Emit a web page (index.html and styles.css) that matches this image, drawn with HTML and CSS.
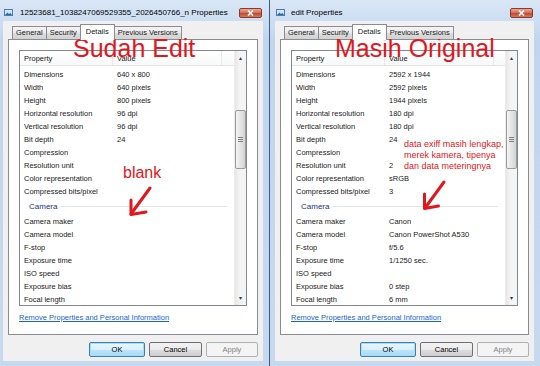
FILE: index.html
```html
<!DOCTYPE html>
<html lang="id">

<head>
  <meta charset="UTF-8">
  <meta name="viewport" content="width=device-width, initial-scale=1.0">
  <title>Properties</title>
  <link rel="stylesheet" href="styles.css">
</head>

<body>
  <div class="desk">
    <!-- kiri: foto yang sudah diedit -->
    <div class="dialog dialog-left">
      <div class="titlebar">
        <svg class="title-icon" width="9" height="7" viewBox="0 0 9 7">
          <rect x="0.5" y="0.5" width="8" height="6" fill="#cfe6f7" stroke="#4f7bb0" />
          <path d="M1 6 L3.5 3.5 L5 5 L6.5 4 L8 6 Z" fill="#2f6a9e" />
        </svg>
        <span class="title">12523681_1038247069529355_2026450766_n Properties</span>
        <span class="close"><svg width="7" height="6" viewBox="0 0 7 6"><path d="M1 0.5 L6 5.5 M6 0.5 L1 5.5" stroke="#fff" stroke-width="1.6" /></svg></span>
      </div>
      <div class="client">
        <div class="tabs">
          <span class="tab">General</span>
          <span class="tab">Security</span>
          <span class="tab active">Details</span>
          <span class="tab">Previous Versions</span>
        </div>
        <div class="panel">
          <div class="list">
            <div class="list-main">
              <div class="list-head">
                <span class="head-prop">Property</span>
                <span class="head-val">Value</span>
              </div>
              <div class="rows">
                <div class="row"><span class="prop">Dimensions</span><span>640 x 800</span></div>
                <div class="row"><span class="prop">Width</span><span>640 pixels</span></div>
                <div class="row"><span class="prop">Height</span><span>800 pixels</span></div>
                <div class="row"><span class="prop">Horizontal resolution</span><span>96 dpi</span></div>
                <div class="row"><span class="prop">Vertical resolution</span><span>96 dpi</span></div>
                <div class="row"><span class="prop">Bit depth</span><span>24</span></div>
                <div class="row"><span class="prop">Compression</span><span></span></div>
                <div class="row"><span class="prop">Resolution unit</span><span></span></div>
                <div class="row"><span class="prop">Color representation</span><span></span></div>
                <div class="row"><span class="prop">Compressed bits/pixel</span><span></span></div>
                <div class="group">Camera</div>
                <div class="row"><span class="prop">Camera maker</span><span></span></div>
                <div class="row"><span class="prop">Camera model</span><span></span></div>
                <div class="row"><span class="prop">F-stop</span><span></span></div>
                <div class="row"><span class="prop">Exposure time</span><span></span></div>
                <div class="row"><span class="prop">ISO speed</span><span></span></div>
                <div class="row"><span class="prop">Exposure bias</span><span></span></div>
                <div class="row"><span class="prop">Focal length</span><span></span></div>
              </div>
            </div>
            <div class="scrollbar">
              <div class="sb-btn">&#9652;</div>
              <div class="sb-track">
                <div class="sb-thumb"><i></i><i></i><i></i></div>
              </div>
              <div class="sb-btn">&#9662;</div>
            </div>
          </div>
          <a class="link" href="#">Remove Properties and Personal Information</a>
        </div>
        <div class="buttons">
          <span class="btn btn-ok">OK</span>
          <span class="btn btn-cancel">Cancel</span>
          <span class="btn btn-apply">Apply</span>
        </div>
      </div>
    </div>

    <!-- kanan: foto asli -->
    <div class="dialog dialog-right">
      <div class="titlebar">
        <svg class="title-icon" width="9" height="7" viewBox="0 0 9 7">
          <rect x="0.5" y="0.5" width="8" height="6" fill="#cfe6f7" stroke="#4f7bb0" />
          <path d="M1 6 L3.5 3.5 L5 5 L6.5 4 L8 6 Z" fill="#2f6a9e" />
        </svg>
        <span class="title">edit Properties</span>
        <span class="close"><svg width="7" height="6" viewBox="0 0 7 6"><path d="M1 0.5 L6 5.5 M6 0.5 L1 5.5" stroke="#fff" stroke-width="1.6" /></svg></span>
      </div>
      <div class="client">
        <div class="tabs">
          <span class="tab">General</span>
          <span class="tab">Security</span>
          <span class="tab active">Details</span>
          <span class="tab">Previous Versions</span>
        </div>
        <div class="panel">
          <div class="list">
            <div class="list-main">
              <div class="list-head">
                <span class="head-prop">Property</span>
                <span class="head-val">Value</span>
              </div>
              <div class="rows">
                <div class="row"><span class="prop">Dimensions</span><span>2592 x 1944</span></div>
                <div class="row"><span class="prop">Width</span><span>2592 pixels</span></div>
                <div class="row"><span class="prop">Height</span><span>1944 pixels</span></div>
                <div class="row"><span class="prop">Horizontal resolution</span><span>180 dpi</span></div>
                <div class="row"><span class="prop">Vertical resolution</span><span>180 dpi</span></div>
                <div class="row"><span class="prop">Bit depth</span><span>24</span></div>
                <div class="row"><span class="prop">Compression</span><span></span></div>
                <div class="row"><span class="prop">Resolution unit</span><span>2</span></div>
                <div class="row"><span class="prop">Color representation</span><span>sRGB</span></div>
                <div class="row"><span class="prop">Compressed bits/pixel</span><span>3</span></div>
                <div class="group">Camera</div>
                <div class="row"><span class="prop">Camera maker</span><span>Canon</span></div>
                <div class="row"><span class="prop">Camera model</span><span>Canon PowerShot A530</span></div>
                <div class="row"><span class="prop">F-stop</span><span>f/5.6</span></div>
                <div class="row"><span class="prop">Exposure time</span><span>1/1250 sec.</span></div>
                <div class="row"><span class="prop">ISO speed</span><span></span></div>
                <div class="row"><span class="prop">Exposure bias</span><span>0 step</span></div>
                <div class="row"><span class="prop">Focal length</span><span>6 mm</span></div>
              </div>
            </div>
            <div class="scrollbar">
              <div class="sb-btn">&#9652;</div>
              <div class="sb-track">
                <div class="sb-thumb"><i></i><i></i><i></i></div>
              </div>
              <div class="sb-btn">&#9662;</div>
            </div>
          </div>
          <a class="link" href="#">Remove Properties and Personal Information</a>
        </div>
        <div class="buttons">
          <span class="btn btn-ok">OK</span>
          <span class="btn btn-cancel">Cancel</span>
          <span class="btn btn-apply">Apply</span>
        </div>
      </div>
    </div>

    <!-- tulisan merah di atas screenshot -->
    <div class="note note-big note-edit">Sudah Edit</div>
    <div class="note note-big note-orig">Masih Original</div>
    <div class="note note-blank">blank</div>
    <div class="note note-small">data exiff masih lengkap,<br>merek kamera, tipenya<br>dan data meteringnya</div>
    <svg class="arrows" width="540" height="366" viewBox="0 0 540 366">
      <g fill="none" stroke="#e3161c" stroke-width="3" stroke-linecap="round" stroke-linejoin="round">
        <path d="M150 188 L131 214" />
        <path d="M131 200 L131 214.5 L146 212" />
        <path d="M444 182 L425 208" />
        <path d="M424.5 194 L424.5 208.5 L438.5 206" />
      </g>
    </svg>
  </div>
</body>

</html>
```

FILE: styles.css
```css
* {
  padding: 0;
  margin: 0;
  box-sizing: border-box;
}

body {
  width: 540px;
  height: 366px;
  overflow: hidden;
  background: #fff;
  font-family: "Liberation Sans", Arial, sans-serif;
  font-size: 7.5px;
  color: #1a1a1a;
}

.desk {
  position: relative;
  display: flex;
  height: 366px;
}

/* jendela */
.dialog {
  display: flex;
  flex-direction: column;
  height: 366px;
  padding-bottom: 5px;
  background: linear-gradient(#d9e7f6, #c0d6ee 40px, #c6daef);
}

.dialog-left {
  width: 269px;
}

.dialog-right {
  width: 271px;
  border-left: 1px solid #3f5d80;
}

.titlebar {
  display: flex;
  align-items: center;
  height: 21px;
  padding: 4px 7px 0 4px;
}

.dialog-right .titlebar {
  padding-left: 6px;
}

.title-icon {
  flex: none;
  margin-right: 7px;
}

.dialog-right .title-icon {
  margin-right: 6px;
}

.title {
  flex: 1;
  font-size: 8px;
  color: #000;
  white-space: nowrap;
  overflow: hidden;
}

.close {
  flex: none;
  display: flex;
  align-items: center;
  justify-content: center;
  width: 23px;
  height: 10px;
  border: 1px solid #8e3a2b;
  border-radius: 2px;
  background: linear-gradient(#eaa897, #d2705c 45%, #c04a33 55%, #d4765f);
}

.client {
  flex: 1;
  display: flex;
  flex-direction: column;
  margin: 0 6px 0 3px;
  padding: 3px 5px 0;
  background: #f0f0f0;
}

.dialog-right .client {
  margin: 0 6px 0 5px;
}

/* tab */
.tabs {
  display: flex;
  align-items: flex-end;
  height: 15px;
  padding-left: 4px;
  position: relative;
  z-index: 1;
}

.tab {
  height: 13px;
  line-height: 12px;
  padding: 0 3px;
  border: 1px solid #898c95;
  border-bottom: none;
  margin-right: -1px;
  background: linear-gradient(#f4f4f4, #ebebeb 50%, #dddddd 51%, #d2d2d2);
  white-space: nowrap;
}

.tab.active {
  height: 16px;
  line-height: 13px;
  margin-bottom: -1px;
  padding: 0 5px;
  background: #fff;
}

.panel {
  height: 296px;
  padding: 10px 10px 0;
  border: 1px solid #898c95;
  background: #fff;
}

/* daftar properti */
.list {
  display: flex;
  height: 256px;
  border: 1px solid #828790;
  overflow: hidden;
}

.list-main {
  flex: 1;
  overflow: hidden;
}

.list-head {
  display: flex;
  height: 15px;
  line-height: 15px;
  border-bottom: 1px solid #e5e5e5;
  background: linear-gradient(#fff, #f7f8f9);
}

.head-prop {
  width: 93px;
  padding-left: 4px;
  border-right: 1px solid #e8e8e8;
}

.head-val {
  width: 109px;
  padding-left: 4px;
  border-right: 1px solid #e8e8e8;
}

.rows {
  padding-top: 2px;
}

.row {
  display: flex;
  height: 13px;
  line-height: 13px;
  white-space: nowrap;
}

.prop {
  width: 97px;
  padding-left: 4px;
}

.group {
  display: flex;
  align-items: center;
  height: 17px;
  padding: 0 7px 0 9px;
  font-size: 8px;
  color: #1e3287;
}

.group::after {
  content: "";
  flex: 1;
  height: 1px;
  margin-left: 4px;
  background: #e2e5ee;
}

/* scrollbar */
.scrollbar {
  display: flex;
  flex-direction: column;
  width: 12px;
  background: linear-gradient(90deg, #e6e6e6, #f4f4f4 40%, #f4f4f4);
  border-left: 1px solid #ececec;
}

.sb-btn {
  height: 14px;
  line-height: 14px;
  text-align: center;
  font-size: 6px;
  color: #3a3a3a;
}

.sb-track {
  flex: 1;
  padding-top: 45px;
}

.sb-thumb {
  display: flex;
  flex-direction: column;
  align-items: center;
  justify-content: center;
  gap: 1px;
  height: 59px;
  border: 1px solid #9a9a9a;
  border-radius: 2px;
  background: linear-gradient(90deg, #f4f4f4, #e4e4e4 50%, #d4d4d4);
}

.sb-thumb i {
  width: 5px;
  height: 1px;
  background: #7f7f7f;
}

.link {
  display: block;
  margin-top: 7px;
  line-height: 10px;
  color: #1a64c4;
  text-decoration: underline;
}

/* tombol */
.buttons {
  display: flex;
  justify-content: flex-end;
  gap: 4px;
  margin-top: 7px;
}

.btn {
  width: 53px;
  height: 15px;
  line-height: 13px;
  text-align: center;
  border: 1px solid #707070;
  border-radius: 2px;
  background: linear-gradient(#f2f2f2, #ebebeb 50%, #dddddd 51%, #cfcfcf);
  color: #000;
}

.btn-ok {
  width: 56px;
  border-color: #3c7fb1;
  box-shadow: inset 0 0 0 1px #a6dcf6;
  background: linear-gradient(#eaf6fd, #d9f0fc 50%, #bee6fd 51%, #a7d9f5);
}

.btn-apply {
  width: 52px;
  border-color: #adb2b5;
  background: #f4f4f4;
  color: #838383;
}

/* anotasi merah */
.note {
  position: absolute;
  font-family: "Liberation Sans", Arial, sans-serif;
  color: #e3161c;
  line-height: 1;
  white-space: nowrap;
}

.note-big {
  top: 36px;
  font-size: 25px;
}

.note-edit {
  left: 73px;
}

.note-orig {
  left: 335px;
}

.note-blank {
  left: 123px;
  top: 165px;
  font-size: 16px;
}

.note-small {
  left: 404px;
  top: 139px;
  font-size: 9px;
  line-height: 11px;
}

.arrows {
  position: absolute;
  left: 0;
  top: 0;
  pointer-events: none;
}
```
